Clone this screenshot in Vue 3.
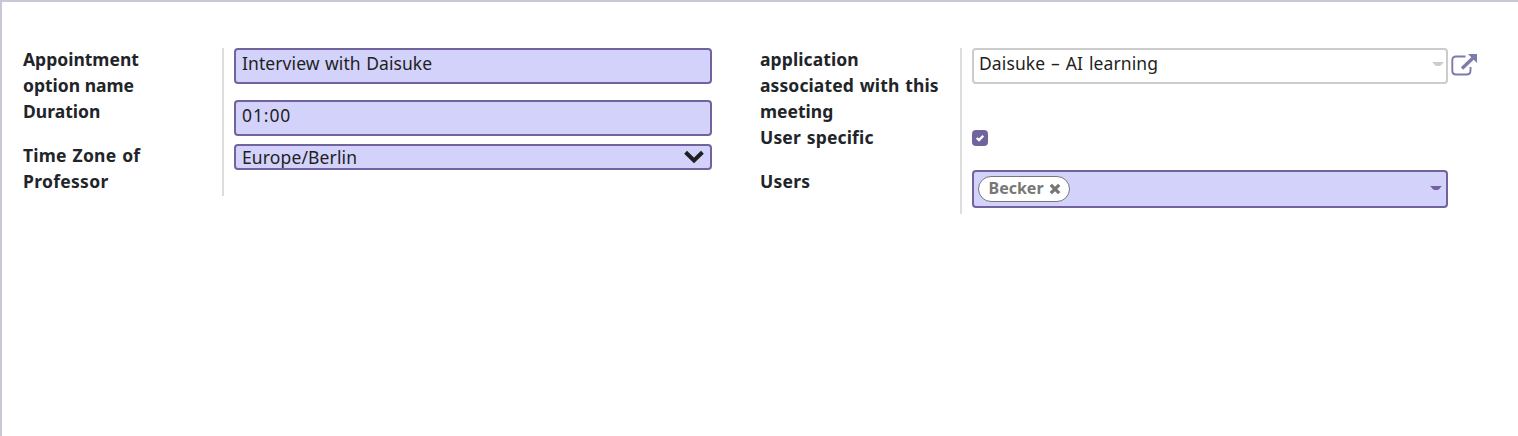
<script setup>
import { ref } from 'vue'

const name = ref('Interview with Daisuke')
const duration = ref('01:00')
const application = ref('Daisuke – AI learning')
const timezone = ref('Europe/Berlin')
const users = ref(['Becker'])
</script>

<template>
  <main class="sheet">
    <section class="group left">
      <div class="row">
        <div class="label"><span>Appointment</span><br /><span>option name</span></div>
        <div class="value"><div class="field"><span class="t-name">{{ name }}</span></div></div>
      </div>
      <div class="row spaced">
        <div class="label"><span>Duration</span></div>
        <div class="value"><div class="field"><span class="t-dur">{{ duration }}</span></div></div>
      </div>
      <div class="row">
        <div class="label"><span class="l4">Time Zone of</span><br /><span class="l5">Professor</span></div>
        <div class="value">
          <div class="field select">
            <span class="t-zone">{{ timezone }}</span>
            <svg class="chevron" width="20" height="14" viewBox="0 0 20 14">
              <path d="M1.6 2.2 10 10.4 18.4 2.2" fill="none" stroke="#1f1f1f" stroke-width="4" />
            </svg>
          </div>
        </div>
      </div>
    </section>

    <section class="group right">
      <div class="row">
        <div class="label"><span class="r1">application</span><br /><span class="r2">associated with this</span><br /><span>meeting</span></div>
        <div class="value linked">
          <div class="field plain">
            <span class="t-app">{{ application }}</span>
            <svg class="caret" width="12" height="5" viewBox="0 0 12 5"><path d="M0 0H12C10.5 1 9 4 7.5 4H4.5C3 4 1.5 1 0 0Z" fill="#ccc" /></svg>
          </div>
          <svg class="external" width="27" height="24" viewBox="0 0 27 24">
            <path d="M14.5 3.5H5Q1.300 3.500 1.300 7V17.500Q1.300 21.500 5 21.500H15.500Q19.500 21.500 19.500 17.500V14" fill="none" stroke="#7c7bad" stroke-width="1.900" />
            <path d="M11 15.500 22 5" fill="none" stroke="#7c7bad" stroke-width="3.400" />
            <path d="M17 1H26V10Z" fill="#7c7bad" />
          </svg>
        </div>
      </div>
      <div class="row spaced">
        <div class="label"><span class="r4">User specific</span></div>
        <div class="value check-cell">
          <span class="checkbox">
            <svg width="16" height="16" viewBox="0 0 16 16"><path d="M4.700 8 7 10.100 11.300 5.700" fill="none" stroke="#fff" stroke-width="2.300" /></svg>
          </span>
        </div>
      </div>
      <div class="row spaced">
        <div class="label"><span class="r5">Users</span></div>
        <div class="value">
          <div class="field tags">
            <span v-for="user in users" :key="user" class="tag">
              <span>{{ user }}</span>
              <svg width="12" height="12" viewBox="0 0 12 12"><path d="M1.8 1.8 10.2 10.2M10.2 1.8 1.8 10.2" stroke="#777" stroke-width="3.3" /></svg>
            </span>
            <svg class="caret dark" width="12" height="5" viewBox="0 0 12 5"><path d="M0 0H12C10.5 1 9 4 7.5 4H4.500C3 4 1.5 1 0 0Z" fill="#71639e" /></svg>
          </div>
        </div>
      </div>
    </section>
  </main>
</template>

<style>
body {
  margin: 0;
  background: #fff;
}
</style>

<style scoped>
.sheet {
  box-sizing: border-box;
  height: 436px;
  padding: 46px 0 0 21px;
  border: solid #c9c6d6;
  border-width: 2px 0 0 2px;
  display: flex;
  align-items: flex-start;
  font-family: "Noto Sans", "Open Sans", sans-serif;
  font-size: 17.5px;
  line-height: 26px;
  color: #1f1f1f;
}
.group { width: 737px; }
.row { display: flex; }
.row.spaced { height: 44px; }
.label {
  box-sizing: border-box;
  width: 201px;
  flex: none;
  border-right: 2px solid #ddd;
  font-weight: 700;
  color: #212529;
  white-space: nowrap;
}
/* Lifts the label text within its line without changing the row height. */
.label span {
  position: relative;
  top: -2px;
}
.right .label { width: 202px; }
.value {
  width: 478px;
  margin-left: 10px;
  flex: none;
}
.right .value { width: 476px; }
.value.linked { display: flex; width: 508px; }
.field {
  box-sizing: border-box;
  width: 100%;
  height: 36px;
  padding: 0 6px;
  border: 2px solid #71639e;
  border-radius: 4px;
  background: #d2d2fa;
  display: flex;
  justify-content: space-between;
  white-space: nowrap;
}
.select { height: 26px; line-height: 22px; }
.chevron { margin-top: 4px; }
.plain {
  width: 476px;
  flex: none;
  padding: 0 2px 0 5px;
  border-color: #ccc;
  background: #fff;
}
.caret { margin-top: 12px; }
.external { margin: 5px 0 0 3px; }
.check-cell { padding-top: 4px; }
.checkbox {
  display: block;
  width: 16px;
  height: 16px;
  border-radius: 4px;
  background: #71639e;
}
.checkbox svg { display: block; }
.tags { height: 38px; padding: 4px 4px 0; }
.tag {
  box-sizing: border-box;
  width: 92px;
  height: 26px;
  padding: 0 8px 0 9.5px;
  border: 1px solid #777;
  border-radius: 13px;
  background: #fff;
  color: #777;
  font-size: 16px;
  font-weight: 700;
  line-height: 23px;
  display: flex;
  justify-content: space-between;
}
.tag svg { margin-top: 6px; }
.caret.dark { margin-top: 10px; }
.t-name { letter-spacing: 0.08px; word-spacing: 0.8px; }
.t-dur { letter-spacing: 0.9px; }
.t-zone { letter-spacing: 0.13px; }
.t-app { letter-spacing: 0.1px; word-spacing: 1.2px; }
.l4 { letter-spacing: 0.2px; word-spacing: 1.2px; }
.l5 { letter-spacing: 0.3px; }
.r1 { letter-spacing: 0.1px; }
.r2 { letter-spacing: 0.1px; word-spacing: 1.3px; }
.r4 { letter-spacing: 0.15px; word-spacing: 1.2px; }
.r5 { letter-spacing: 0.25px; }
</style>
